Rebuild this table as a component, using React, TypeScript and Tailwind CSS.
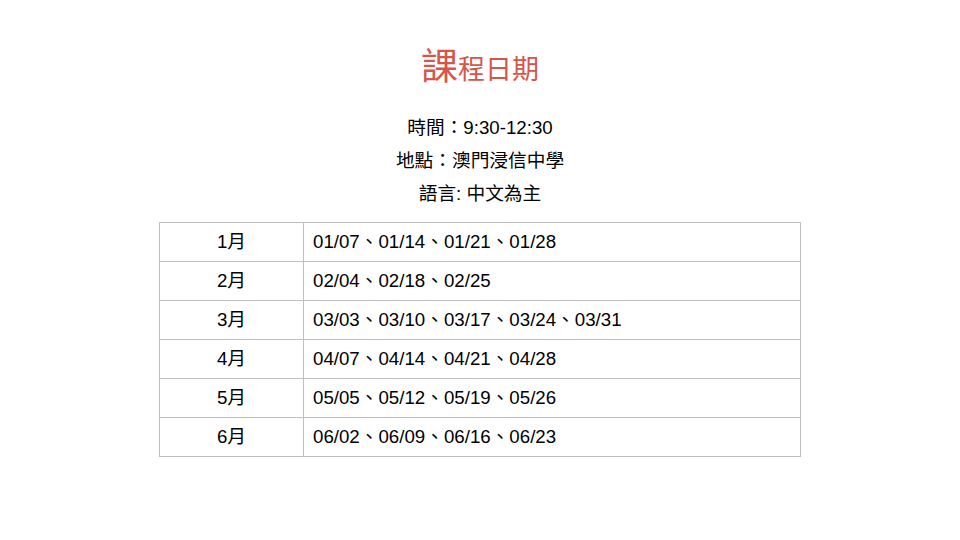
const rows = [
  { m: '1月', d: '01/07、01/14、01/21、01/28' },
  { m: '2月', d: '02/04、02/18、02/25' },
  { m: '3月', d: '03/03、03/10、03/17、03/24、03/31' },
  { m: '4月', d: '04/07、04/14、04/21、04/28' },
  { m: '5月', d: '05/05、05/12、05/19、05/26' },
  { m: '6月', d: '06/02、06/09、06/16、06/23' },
];

export default function App() {
  return (
    <div
      className="w-[960px] h-[540px] bg-white text-black flex flex-col items-center"
      style={{ fontFamily: '"Liberation Sans", "Noto Sans CJK TC", sans-serif' }}
    >
      <h1 className="mt-[45px] h-[41px] flex items-end text-[#d5564a] leading-none">
        <span className="text-[37px]">課</span>
        <span className="text-[27px] pb-[2px]">程日期</span>
      </h1>
      <div className="mt-[25px] flex flex-col items-center text-[18.7px] leading-[33px]">
        <div>時間：9:30-12:30</div>
        <div>地點：澳門浸信中學</div>
        <div>語言: 中文為主</div>
      </div>
      <table className="mt-[12px] w-[642px] border-collapse text-[18.7px]">
        <tbody>
          {rows.map((r) => (
            <tr key={r.m} className="h-[39px]">
              <td className="w-[144px] border border-[#bfbfbf] text-center align-middle">{r.m}</td>
              <td className="border border-[#bfbfbf] px-[9px] align-middle">{r.d}</td>
            </tr>
          ))}
        </tbody>
      </table>
    </div>
  );
}
